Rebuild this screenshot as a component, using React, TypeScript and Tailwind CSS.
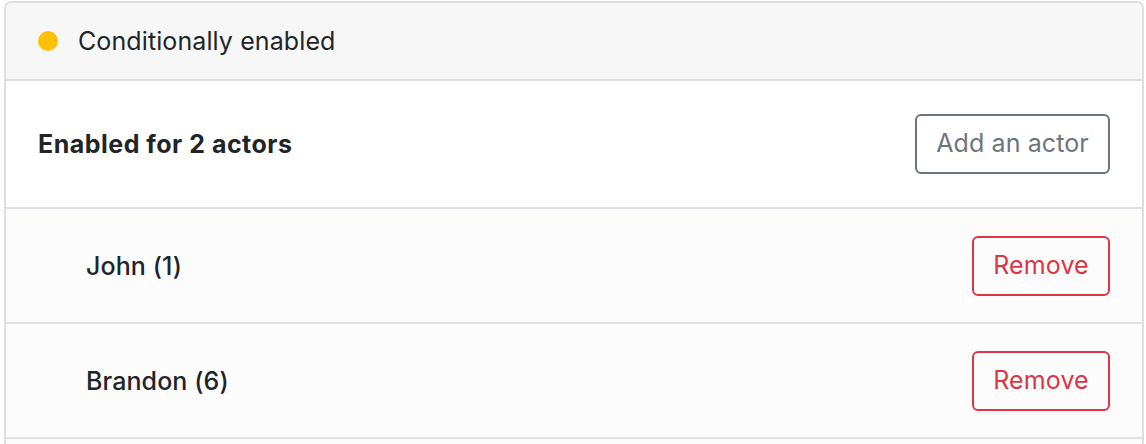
import React from 'react';

const actors = [
  { name: 'John', id: 1 },
  { name: 'Brandon', id: 6 },
];

const App: React.FC = () => {
  return (
    <div className="w-[1146px] h-[444px] overflow-hidden bg-white pl-[4px] pt-[1px] font-['Inter','Noto_Sans',sans-serif] text-[25px] tracking-[0.1px] text-[#212529]">
      <div className="w-[1140px] rounded-t-[7px] border-2 border-b-0 border-[#dedede]">
        {/* header */}
        <div className="flex h-[78px] items-center gap-[20px] border-b-2 border-[#dedede] bg-[#f7f7f7] px-[32px] rounded-t-[6px]">
          <span className="h-[20px] w-[20px] rounded-full bg-[#ffc107]" />
          <span className="pt-[2px]">Conditionally enabled</span>
        </div>

        <div className="flex h-[128px] items-center justify-between border-b-2 border-[#dee2e6] bg-white px-[32px]">
          <span className="pt-[2px] font-bold tracking-[0.5px]">Enabled for 2 actors</span>
          <button className="flex h-[60px] w-[195px] items-center justify-center rounded-[6px] border-2 border-[#6c757d] text-[#6c757d]">
            Add an actor
          </button>
        </div>

        {actors.map((a) => (
          <div
            key={a.id}
            className="flex h-[115px] items-center justify-between border-b-2 border-[#dee2e6] bg-[#fcfcfc] pl-[80px] pr-[32px]"
          >
            <span className="pt-[2px] font-medium">
              {a.name} ({a.id})
            </span>
            <button className="flex h-[60px] w-[138px] items-center justify-center rounded-[6px] border-2 border-[#dc3545] text-[#dc3545]">
              Remove
            </button>
          </div>
        ))}
        <div className="h-[20px] bg-[#fcfcfc]" />
      </div>
    </div>
  );
};

export default App;
